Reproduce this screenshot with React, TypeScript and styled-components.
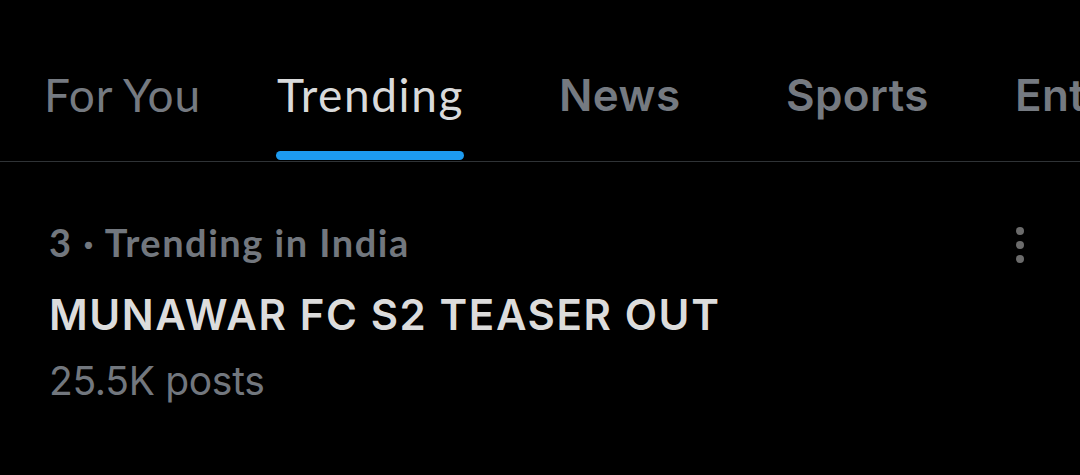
import React from "react";
import styled, { createGlobalStyle } from "styled-components";

const Global = createGlobalStyle`
  html, body { margin: 0; padding: 0; background: #000; }
  body { width: 1080px; height: 475px; overflow: hidden; }
`;

const Page = styled.div`
  width: 1080px;
  height: 475px;
  background: #000;
  display: flex;
  flex-direction: column;
`;

const TabBar = styled.nav`
  display: flex;
  height: 162px;
  padding-left: 44px;
  border-bottom: 1px solid #2f3336;
  box-sizing: border-box;
  overflow: hidden;
`;

const Tab = styled.div<{ $w: number }>`
  flex: 0 0 ${(p) => p.$w}px;
  display: flex;
  align-items: flex-start;
`;

const TabLabel = styled.span<{ $active?: boolean; $lato?: boolean }>`
  position: relative;
  display: inline-block;
  margin-top: 69px;
  font-family: ${(p) => (p.$lato ? '"Lato", sans-serif' : '"Inter", sans-serif')};
  font-size: ${(p) => (p.$lato ? 46 : 44)}px;
  font-weight: ${(p) => (p.$lato ? 400 : 600)};
  letter-spacing: ${(p) => (p.$lato ? (p.$active ? 1.6 : 0.8) : 0.4)}px;
  line-height: 52px;
  color: ${(p) => (p.$active ? "#d9dadb" : "#757a81")};
  white-space: nowrap;
`;

const Indicator = styled.span`
  position: absolute;
  left: -1px;
  right: 0;
  top: 82px;
  height: 9px;
  border-radius: 5px;
  background: #1d9bf0;
`;

const Trend = styled.article`
  display: flex;
  justify-content: space-between;
  padding: 58px 52px 0 49px;
`;

const TrendBody = styled.div`
  display: flex;
  flex-direction: column;
`;

const Meta = styled.div`
  font-family: "Lato", sans-serif;
  font-weight: 700;
  font-size: 38px;
  letter-spacing: 1.5px;
  line-height: 44px;
  color: #72777e;
`;

const Title = styled.div`
  margin-top: 29px;
  font-family: "Inter", sans-serif;
  font-weight: 600;
  font-size: 42px;
  line-height: 44px;
  color: #dcdcdc;
  letter-spacing: 1.6px;
`;

const Count = styled.div`
  margin-top: 22px;
  font-family: "Inter", sans-serif;
  font-weight: 400;
  font-size: 39px;
  line-height: 44px;
  letter-spacing: -0.3px;
  color: #72777e;
`;

const MoreButton = styled.div`
  margin-top: 7px;
  width: 16px;
  display: flex;
  flex-direction: column;
  align-items: center;
  gap: 6px;
`;

const Dot = styled.span`
  width: 8px;
  height: 8px;
  border-radius: 50%;
  background: #6b6b6b;
`;

export default function App() {
  return (
    <Page>
      <Global />
      <TabBar>
        <Tab $w={233}>
          <TabLabel $lato>For You</TabLabel>
        </Tab>
        <Tab $w={282}>
          <TabLabel $lato $active>
            Trending
            <Indicator />
          </TabLabel>
        </Tab>
        <Tab $w={227}>
          <TabLabel>News</TabLabel>
        </Tab>
        <Tab $w={229}>
          <TabLabel>Sports</TabLabel>
        </Tab>
        <Tab $w={300}>
          <TabLabel>Entertainment</TabLabel>
        </Tab>
      </TabBar>
      <Trend>
        <TrendBody>
          <Meta>3 · Trending in India</Meta>
          <Title>MUNAWAR FC S2 TEASER OUT</Title>
          <Count>25.5K posts</Count>
        </TrendBody>
        <MoreButton>
          <Dot />
          <Dot />
          <Dot />
        </MoreButton>
      </Trend>
    </Page>
  );
}
